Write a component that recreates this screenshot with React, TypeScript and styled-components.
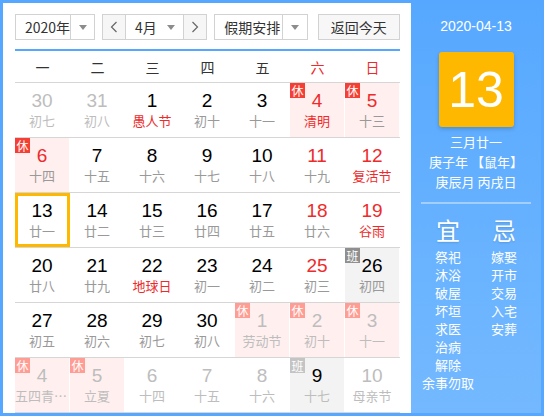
import { FC } from "react";
import styled, { createGlobalStyle } from "styled-components";

const GlobalStyle = createGlobalStyle`
  html, body {
    margin: 0;
    padding: 0;
    background: #fff;
  }
  body {
    font-family: "Liberation Sans", "Noto Sans CJK SC", sans-serif;
    color: #333;
  }
`;

const RED = "#ee2b2b";

type Kind = "normal" | "holiday" | "work";

interface Day {
  n: number;
  lunar: string;
  other?: boolean;
  weekend?: boolean;
  fest?: boolean;
  kind?: Kind;
  today?: boolean;
}

const rows: Day[][] = [
  [
    { n: 30, lunar: "初七", other: true },
    { n: 31, lunar: "初八", other: true },
    { n: 1, lunar: "愚人节", fest: true },
    { n: 2, lunar: "初十" },
    { n: 3, lunar: "十一" },
    { n: 4, lunar: "清明", fest: true, weekend: true, kind: "holiday" },
    { n: 5, lunar: "十三", weekend: true, kind: "holiday" },
  ],
  [
    { n: 6, lunar: "十四", kind: "holiday" },
    { n: 7, lunar: "十五" },
    { n: 8, lunar: "十六" },
    { n: 9, lunar: "十七" },
    { n: 10, lunar: "十八" },
    { n: 11, lunar: "十九", weekend: true },
    { n: 12, lunar: "复活节", weekend: true, fest: true },
  ],
  [
    { n: 13, lunar: "廿一", today: true },
    { n: 14, lunar: "廿二" },
    { n: 15, lunar: "廿三" },
    { n: 16, lunar: "廿四" },
    { n: 17, lunar: "廿五" },
    { n: 18, lunar: "廿六", weekend: true },
    { n: 19, lunar: "谷雨", weekend: true, fest: true },
  ],
  [
    { n: 20, lunar: "廿八" },
    { n: 21, lunar: "廿九" },
    { n: 22, lunar: "地球日", fest: true },
    { n: 23, lunar: "初一" },
    { n: 24, lunar: "初二" },
    { n: 25, lunar: "初三", weekend: true },
    { n: 26, lunar: "初四", kind: "work" },
  ],
  [
    { n: 27, lunar: "初五" },
    { n: 28, lunar: "初六" },
    { n: 29, lunar: "初七" },
    { n: 30, lunar: "初八" },
    { n: 1, lunar: "劳动节", other: true, kind: "holiday" },
    { n: 2, lunar: "初十", other: true, kind: "holiday" },
    { n: 3, lunar: "十一", other: true, kind: "holiday" },
  ],
  [
    { n: 4, lunar: "五四青年节", other: true, kind: "holiday" },
    { n: 5, lunar: "立夏", other: true, kind: "holiday" },
    { n: 6, lunar: "十四", other: true },
    { n: 7, lunar: "十五", other: true },
    { n: 8, lunar: "十六", other: true },
    { n: 9, lunar: "十七", other: true, kind: "work" },
    { n: 10, lunar: "母亲节", other: true },
  ],
];

const weekNames = ["一", "二", "三", "四", "五", "六", "日"];
const yi = ["祭祀", "沐浴", "破屋", "坏垣", "求医", "治病", "解除", "余事勿取"];
const ji = ["嫁娶", "开市", "交易", "入宅", "安葬"];

const Frame = styled.div`
  box-sizing: border-box;
  width: 544px;
  height: 416px;
  border: 3px solid #55a7ff;
  display: flex;
  overflow: hidden;
`;

const Main = styled.div`
  width: 408px;
  box-sizing: border-box;
  padding: 11px 11px 0 12px;
  background: #fff;
  display: flex;
  flex-direction: column;
`;

const Toolbar = styled.div`
  height: 26px;
  display: flex;
  gap: 7px;
  margin-bottom: 9px;
  font-size: 14px;
  color: #333;
`;

const Select = styled.div<{ $w: number }>`
  box-sizing: border-box;
  width: ${(p) => p.$w}px;
  height: 26px;
  border: 1px solid #d2d2d2;
  background: #fff;
  display: flex;
  align-items: center;
`;

const SelectText = styled.span`
  flex: 1;
  padding-left: 9px;
  font-family: "Noto Sans CJK SC", sans-serif;
  font-size: 14px;
  line-height: 24px;
  white-space: nowrap;
`;

const ArrowBox = styled.span<{ $line?: boolean }>`
  width: 24px;
  height: 100%;
  display: flex;
  align-items: center;
  justify-content: center;
  border-left: ${(p) => (p.$line ? "1px solid #d2d2d2" : "none")};
  &::after {
    content: "";
    border-left: 4px solid transparent;
    border-right: 4px solid transparent;
    border-top: 5px solid #8c8c8c;
  }
`;

const MonthGroup = styled.div`
  box-sizing: border-box;
  width: 106px;
  height: 26px;
  border: 1px solid #d2d2d2;
  display: flex;
`;

const StepBtn = styled.span`
  width: 22px;
  background: #f6f6f6;
  display: flex;
  align-items: center;
  justify-content: center;
  color: #666;
`;

const MonthSel = styled.span`
  flex: 1;
  display: flex;
  align-items: center;
  border-left: 1px solid #d2d2d2;
  border-right: 1px solid #d2d2d2;
  background: #fff;
`;

const TodayBtn = styled.div`
  box-sizing: border-box;
  width: 83px;
  height: 26px;
  margin-left: 3px;
  border: 1px solid #d2d2d2;
  background: #f7f7f7;
  display: flex;
  align-items: center;
  justify-content: center;
  font-family: "Noto Sans CJK SC", sans-serif;
  font-size: 14px;
`;

const WeekHead = styled.div`
  display: grid;
  grid-template-columns: repeat(7, 55px);
  height: 33px;
  border-top: 2px solid #55a7ff;
  border-bottom: 1px solid #d6d6d6;
`;

const WeekName = styled.div<{ $red: boolean }>`
  display: flex;
  align-items: center;
  justify-content: center;
  font-family: "Noto Sans CJK SC", sans-serif;
  font-size: 14px;
  color: ${(p) => (p.$red ? RED : "#333")};
`;

const Row = styled.div`
  display: grid;
  grid-template-columns: repeat(7, 55px);
  height: 54px;
  border-bottom: 1px solid #d6d6d6;
  flex-shrink: 0;
`;

const Cell = styled.div<{ $kind: Kind; $today: boolean }>`
  position: relative;
  box-sizing: border-box;
  border-right: 1px solid #fff;
  background: ${(p) =>
    p.$kind === "holiday" ? "#fff0ef" : p.$kind === "work" ? "#f3f3f3" : "#fff"};
  display: flex;
  flex-direction: column;
  align-items: center;
  justify-content: center;
  ${(p) => (p.$today ? "outline: 3px solid #ffb800; outline-offset: -3px;" : "")}
`;

const Num = styled.div<{ $color: string }>`
  font-size: 19px;
  line-height: 22px;
  color: ${(p) => p.$color};
`;

const Lunar = styled.div<{ $color: string }>`
  max-width: 54px;
  overflow: hidden;
  white-space: nowrap;
  text-overflow: ellipsis;
  font-family: "Noto Sans CJK SC", sans-serif;
  font-size: 13px;
  line-height: 18px;
  color: ${(p) => p.$color};
`;

const Badge = styled.span<{ $bg: string }>`
  position: absolute;
  left: 0;
  top: 0;
  width: 15px;
  height: 15px;
  background: ${(p) => p.$bg};
  color: #fff;
  font-family: "Noto Sans CJK SC", sans-serif;
  font-size: 12px;
  line-height: 15px;
  text-align: center;
`;

const Panel = styled.div`
  width: 130px;
  background: linear-gradient(180deg, #56a8ff 0%, #74b9ff 100%);
  color: #fff;
  display: flex;
  flex-direction: column;
  align-items: center;
  padding-top: 13px;
  font-family: "Noto Sans CJK SC", sans-serif;
`;

const DateLine = styled.div`
  font-family: "Liberation Sans", sans-serif;
  font-size: 14px;
  line-height: 20px;
`;

const DayBox = styled.div`
  margin-top: 16px;
  width: 75px;
  height: 75px;
  border-radius: 3px;
  background: #ffb800;
  box-shadow: 0 2px 4px rgba(0, 0, 0, 0.18);
  display: flex;
  align-items: center;
  justify-content: center;
  font-family: "Liberation Sans", sans-serif;
  font-size: 50px;
`;

const LunarInfo = styled.div`
  margin-top: 5px;
  font-size: 13px;
  line-height: 20px;
  text-align: center;
`;

const Divider = styled.div`
  margin-top: 10px;
  width: 110px;
  height: 2px;
  background: rgba(255, 255, 255, 0.4);
`;

const Advice = styled.div`
  margin-top: 11px;
  display: flex;
  gap: 8px;
`;

const AdviceCol = styled.div`
  width: 48px;
  display: flex;
  flex-direction: column;
  align-items: center;
`;

const AdviceTitle = styled.div`
  font-size: 24px;
  line-height: 30px;
  margin-bottom: 3px;
  text-shadow: 0 1px 2px rgba(0, 0, 0, 0.15);
`;

const AdviceItem = styled.div`
  font-size: 13px;
  line-height: 18px;
  white-space: nowrap;
`;

const Chevron: FC<{ dir: "l" | "r" }> = ({ dir }) => (
  <svg width="8" height="12" viewBox="0 0 8 12">
    <path
      d={dir === "l" ? "M6.5 1 L1.5 6 L6.5 11" : "M1.5 1 L6.5 6 L1.5 11"}
      fill="none"
      stroke="#666"
      strokeWidth="1.2"
    />
  </svg>
);

const numColor = (d: Day) => {
  if (d.other) return d.kind === "work" ? "#000" : "#bdbdbd";
  if (d.kind === "work") return "#000";
  if (d.weekend || d.kind === "holiday") return RED;
  return "#000";
};

const lunarColor = (d: Day) => {
  if (d.other) return "#bdbdbd";
  if (d.fest) return RED;
  return "#999";
};

const badgeColor = (d: Day) => {
  if (d.kind === "holiday") return d.other ? "#ff9d94" : "#f53f34";
  return d.other ? "#c4c4c4" : "#8f8f8f";
};

const App: FC = () => {
  return (
    <>
      <GlobalStyle />
      <Frame>
        <Main>
          <Toolbar>
            <Select $w={80}>
              <SelectText>2020年</SelectText>
              <ArrowBox $line />
            </Select>
            <MonthGroup>
              <StepBtn>
                <Chevron dir="l" />
              </StepBtn>
              <MonthSel>
                <SelectText>4月</SelectText>
                <ArrowBox />
              </MonthSel>
              <StepBtn>
                <Chevron dir="r" />
              </StepBtn>
            </MonthGroup>
            <Select $w={94}>
              <SelectText>假期安排</SelectText>
              <ArrowBox $line />
            </Select>
            <TodayBtn>返回今天</TodayBtn>
          </Toolbar>
          <WeekHead>
            {weekNames.map((w, i) => (
              <WeekName key={w} $red={i >= 5}>
                {w}
              </WeekName>
            ))}
          </WeekHead>
          {rows.map((row, ri) => (
            <Row key={ri}>
              {row.map((d, ci) => (
                <Cell key={ci} $kind={d.kind ?? "normal"} $today={!!d.today}>
                  {d.kind && d.kind !== "normal" && (
                    <Badge $bg={badgeColor(d)}>{d.kind === "holiday" ? "休" : "班"}</Badge>
                  )}
                  <Num $color={numColor(d)}>{d.n}</Num>
                  <Lunar $color={lunarColor(d)}>{d.lunar}</Lunar>
                </Cell>
              ))}
            </Row>
          ))}
        </Main>
        <Panel>
          <DateLine>2020-04-13</DateLine>
          <DayBox>13</DayBox>
          <LunarInfo>
            三月廿一
            <br />
            庚子年 【鼠年】
            <br />
            庚辰月 丙戌日
          </LunarInfo>
          <Divider />
          <Advice>
            <AdviceCol>
              <AdviceTitle>宜</AdviceTitle>
              {yi.map((t) => (
                <AdviceItem key={t}>{t}</AdviceItem>
              ))}
            </AdviceCol>
            <AdviceCol>
              <AdviceTitle>忌</AdviceTitle>
              {ji.map((t) => (
                <AdviceItem key={t}>{t}</AdviceItem>
              ))}
            </AdviceCol>
          </Advice>
        </Panel>
      </Frame>
    </>
  );
};

export default App;
